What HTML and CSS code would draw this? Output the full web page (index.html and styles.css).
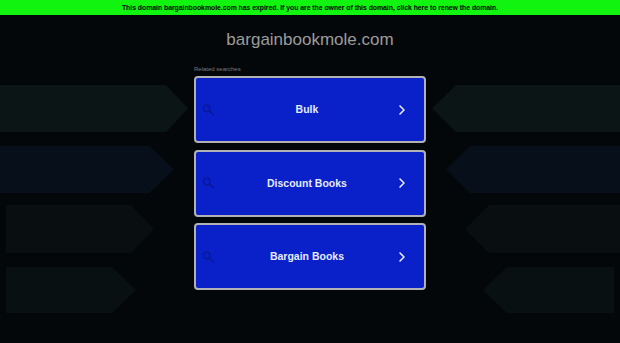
FILE: index.html
```html
<!DOCTYPE html>
<html lang="en">
<head>
<meta charset="utf-8">
<title>bargainbookmole.com</title>
<link rel="stylesheet" href="styles.css">
</head>
<body>
<svg class="backdrop" viewBox="0 0 620 343" width="620" height="343" aria-hidden="true">
  <polygon class="a1" points="0,85 166,85 188,108.5 166,132 0,132"/>
  <polygon class="a2" points="0,146 149,146 174,169.5 149,193 0,193"/>
  <polygon class="a3" points="6,205 131,205 154,229 131,253 6,253"/>
  <polygon class="a4" points="6,267 112,267 136,290 112,313 6,313"/>
  <polygon class="a1" points="432,108.5 456,85 620,85 620,132 456,132"/>
  <polygon class="a2" points="446,169.5 470,146 620,146 620,193 470,193"/>
  <polygon class="a3" points="465,229 489,205 620,205 620,253 489,253"/>
  <polygon class="a4" points="483,290 507,267 614,267 614,313 507,313"/>
</svg>
<a class="expired" href="#">This domain bargainbookmole.com has expired. If you are the owner of this domain, click here to renew the domain.</a>
<main class="wrap">
  <h1 class="domain">bargainbookmole.com</h1>
  <section class="related">
    <p class="label">Related searches</p>
    <ul class="links">
      <li><a class="link" href="#">
        <svg class="search" viewBox="0 0 13 12" width="13" height="12"><circle cx="4.7" cy="4.5" r="3.3"/><line x1="7.2" y1="7" x2="11.5" y2="10.8"/></svg>
        <span class="text">Bulk</span>
        <svg class="chev" viewBox="0 0 6 10" width="6" height="10"><polyline points="1,1 5,5 1,9"/></svg>
      </a></li>
      <li><a class="link" href="#">
        <svg class="search" viewBox="0 0 13 12" width="13" height="12"><circle cx="4.7" cy="4.5" r="3.3"/><line x1="7.2" y1="7" x2="11.5" y2="10.8"/></svg>
        <span class="text">Discount Books</span>
        <svg class="chev" viewBox="0 0 6 10" width="6" height="10"><polyline points="1,1 5,5 1,9"/></svg>
      </a></li>
      <li><a class="link" href="#">
        <svg class="search" viewBox="0 0 13 12" width="13" height="12"><circle cx="4.7" cy="4.5" r="3.3"/><line x1="7.2" y1="7" x2="11.5" y2="10.8"/></svg>
        <span class="text">Bargain Books</span>
        <svg class="chev" viewBox="0 0 6 10" width="6" height="10"><polyline points="1,1 5,5 1,9"/></svg>
      </a></li>
    </ul>
  </section>
</main>
</body>
</html>
```

FILE: styles.css
```css
* { box-sizing: border-box; }
html, body { margin: 0; padding: 0; }
body {
  background: #04070a;
  font-family: "Liberation Sans", Arial, sans-serif;
  width: 620px;
  height: 343px;
  overflow: hidden;
  position: relative;
}
.backdrop {
  position: absolute;
  left: 0;
  top: 0;
  z-index: 0;
}
.a1 { fill: #0b1516; }
.a2 { fill: #07101a; }
.a3 { fill: #090f11; }
.a4 { fill: #091011; }

.expired {
  position: relative;
  z-index: 1;
  display: block;
  height: 15px;
  line-height: 15px;
  background: #10f410;
  color: #000;
  font-weight: bold;
  font-size: 6.9px;
  letter-spacing: -0.04px;
  text-align: center;
  text-decoration: none;
  white-space: nowrap;
}
.wrap {
  position: relative;
  z-index: 1;
  display: flex;
  flex-direction: column;
  align-items: center;
}
.domain {
  margin: 15px 0 0;
  font-size: 17px;
  line-height: 20px;
  font-weight: normal;
  color: #9c9c9c;
}
.related {
  width: 232px;
  margin-top: 15px;
}
.label {
  margin: 0 0 3px;
  font-size: 6px;
  line-height: 8px;
  color: #7a7a7a;
}
.links {
  list-style: none;
  margin: 0;
  padding: 0;
  display: flex;
  flex-direction: column;
  gap: 6.5px;
}
.link {
  display: grid;
  grid-template-columns: 13px 1fr 6px;
  align-items: center;
  height: 67px;
  padding: 0 19px 0 6px;
  background: #0a20c8;
  border: 2px solid #b2b2b4;
  border-radius: 4px;
  text-decoration: none;
}
.search {
  display: block;
  fill: none;
  stroke: #0a1890;
  stroke-width: 1.3;
  stroke-linecap: round;
}
.text {
  text-align: center;
  color: #e6ecff;
  font-weight: bold;
  font-size: 10.5px;
  padding-bottom: 1px;
}
.chev {
  display: block;
  fill: none;
  stroke: #f0f3ff;
  stroke-width: 1.5;
  stroke-linecap: round;
  stroke-linejoin: round;
}
```
